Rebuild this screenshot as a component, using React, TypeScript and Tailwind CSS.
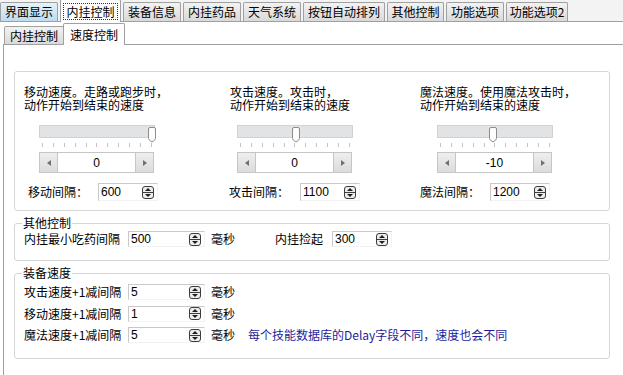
import React from "react";

const CJK = "font-['Noto_Sans_CJK_SC','Noto_Sans',sans-serif]";

function Spinner() {
  return (
    <svg width="12" height="13" viewBox="0 0 12 13" className="shrink-0">
      <rect x="0.5" y="0.5" width="11" height="12" rx="2.5" fill="#ededed" stroke="#3c3c3c" />
      <line x1="1" y1="6.5" x2="11" y2="6.5" stroke="#3c3c3c" />
      <polygon points="3,5 9,5 6,2" fill="#1e1e1e" />
      <polygon points="3,8 9,8 6,11" fill="#1e1e1e" />
    </svg>
  );
}

function NumInput({ value, w, h = 16 }: { value: string; w: number; h?: number }) {
  return (
    <div
      className="flex items-center justify-between bg-white border-t border-l border-[#c9c9c9] border-r border-b border-r-[#f2f2f2] border-b-[#f2f2f2] pl-[2px] pr-[3px] shrink-0"
      style={{ width: w, height: h }}
    >
      <span className="font-['Liberation_Sans',sans-serif] text-[12px] leading-none text-black">{value}</span>
      <Spinner />
    </div>
  );
}

function TopTab({ label, w, ml, selected, hover }: { label: string; w: number; ml: number; selected?: boolean; hover?: boolean }) {
  if (selected) {
    return (
      <div
        className="h-[23px] -mb-px bg-white border-t border-l border-r border-[#a0a0a0] rounded-t-[2px] flex items-center justify-center shrink-0 relative z-10"
        style={{ width: w, marginLeft: ml }}
      >
        <span className="border border-dotted border-[#333] px-[2px] leading-[15px] text-[12px] text-black">{label}</span>
      </div>
    );
  }
  return (
    <div
      className={
        "h-[19px] border-t border-l border-r border-[#a0a0a0] rounded-t-[2px] flex items-center justify-center shrink-0 text-[12px] text-black " +
        (hover ? "bg-gradient-to-b from-[#e4f2fa] to-[#bcdcef]" : "bg-gradient-to-b from-[#f3f3f3] to-[#d9d9d9]")
      }
      style={{ width: w, marginLeft: ml }}
    >
      {label}
    </div>
  );
}

function Ticks() {
  return (
    <div className="flex justify-between px-[3px] h-[4px] mt-[5px]">
      {Array.from({ length: 11 }).map((_, i) => (
        <div key={i} className="w-px h-[4px] bg-[#c4c4c4]" />
      ))}
    </div>
  );
}

function Thumb({ left }: { left: number }) {
  return (
    <svg width="8" height="16" viewBox="0 0 8 16" className="absolute top-[1px]" style={{ left }}>
      <path d="M0.5,2 Q0.5,0.5 2,0.5 H6 Q7.5,0.5 7.5,2 V11.5 Q7.5,13 4,15 Q0.5,13 0.5,11.5 Z" fill="#fdfdfd" stroke="#8c8c8c" />
    </svg>
  );
}

function ScrollBox({ value }: { value: string }) {
  return (
    <div className="flex h-[21px] w-[115px] border border-[#c6c6c6] bg-white mt-[5px]">
      <div className="w-[18px] h-full bg-gradient-to-b from-[#eeeeee] to-[#dcdcdc] border-r border-[#c6c6c6] flex items-center justify-center">
        <svg width="4" height="6" viewBox="0 0 4 6"><polygon points="4,0 4,6 0,3" fill="#707070" /></svg>
      </div>
      <div className="flex-1 flex items-center justify-center font-['Liberation_Sans',sans-serif] text-[12px] text-black">{value}</div>
      <div className="w-[18px] h-full bg-gradient-to-b from-[#eeeeee] to-[#dcdcdc] border-l border-[#c6c6c6] flex items-center justify-center">
        <svg width="4" height="6" viewBox="0 0 4 6"><polygon points="0,0 0,6 4,3" fill="#707070" /></svg>
      </div>
    </div>
  );
}

function SpeedColumn({
  w,
  line1,
  sliderOff,
  thumb,
  value,
  label,
  labelOff,
  labelW,
  input,
}: {
  w?: number;
  line1: string;
  sliderOff: number;
  thumb: number;
  value: string;
  label: string;
  labelOff: number;
  labelW: number;
  input: string;
}) {
  return (
    <div className={"flex flex-col " + (w ? "shrink-0" : "flex-1")} style={w ? { width: w } : undefined}>
      <div className="text-[12px] leading-[13px] text-black">
        <div>{line1}</div>
        <div>动作开始到结束的速度</div>
      </div>
      <div className="mt-[14px]" style={{ marginLeft: sliderOff, width: 116 }}>
        <div className="relative h-[13px] bg-[#e1e3e5] border border-[#d0d3d6]">
          <Thumb left={thumb} />
        </div>
        <Ticks />
        <ScrollBox value={value} />
      </div>
      <div className="flex items-center mt-[10px] h-[18px]">
        <div className="text-[12px] text-black shrink-0" style={{ marginLeft: labelOff, width: labelW }}>
          {label}
        </div>
        <NumInput value={input} w={60} h={18} />
      </div>
    </div>
  );
}

function Group({ title, h, children, className }: { title?: string; h: number; children: React.ReactNode; className?: string }) {
  return (
    <div className={"relative w-[596px] border border-[#d6d6d6] rounded-[3px] " + (className || "")} style={{ height: h }}>
      {title && (
        <div className="absolute -top-[8px] left-[7px] bg-white px-px text-[12px] leading-[13px] text-black">{title}</div>
      )}
      {children}
    </div>
  );
}

function Row({ label, value, children }: { label: string; value: string; children?: React.ReactNode }) {
  return (
    <div className="flex items-center h-[16px] text-[12px] text-black">
      <div className="w-[104px] shrink-0">{label}</div>
      <NumInput value={value} w={77} />
      <div className="ml-[6px]">毫秒</div>
      {children}
    </div>
  );
}

export default function App() {
  return (
    <div className={"w-[623px] h-[375px] overflow-hidden bg-white flex flex-col " + CJK}>
      {/* top tab strip */}
      <div className="h-[22px] flex items-end border-b border-[#a0a0a0] bg-[#f3f3f3] shrink-0">
        <TopTab label="界面显示" w={58} ml={0} hover />
        <TopTab label="内挂控制" w={61} ml={2} selected />
        <TopTab label="装备信息" w={58} ml={2} />
        <TopTab label="内挂药品" w={58} ml={2} />
        <TopTab label="天气系统" w={58} ml={2} />
        <TopTab label="按钮自动排列" w={82} ml={2} />
        <TopTab label="其他控制" w={57} ml={2} />
        <TopTab label="功能选项" w={58} ml={2} />
        <TopTab label="功能选项2" w={62} ml={2} />
      </div>

      {/* inner tab control */}
      <div className="ml-[3px] mt-[2px] flex flex-col flex-1">
        <div className="h-[21px] flex items-end border-b border-[#a0a0a0] pl-px shrink-0">
          <div className="h-[18px] w-[60px] border-t border-l border-r border-[#a0a0a0] rounded-t-[2px] bg-gradient-to-b from-[#f3f3f3] to-[#d9d9d9] flex items-center justify-center text-[12px] text-black">
            内挂控制
          </div>
          <div className="h-[22px] -mb-px -ml-px w-[62px] border-t border-l border-r border-[#a0a0a0] rounded-t-[2px] bg-white flex items-center justify-center text-[12px] text-black relative z-10">
            速度控制
          </div>
        </div>

        <div className="flex-1 border-l border-[#a0a0a0] pl-[10px] pt-[26px]">
          <Group h={140}>
            <div className="flex pl-[9px] pt-[13px]">
              <SpeedColumn
                w={206}
                line1="移动速度。走路或跑步时，"
                sliderOff={15}
                thumb={108}
                value="0"
                label="移动间隔："
                labelOff={4}
                labelW={70}
                input="600"
              />
              <SpeedColumn
                w={190}
                line1="攻击速度。攻击时，"
                sliderOff={7}
                thumb={54}
                value="0"
                label="攻击间隔："
                labelOff={-1}
                labelW={71}
                input="1100"
              />
              <SpeedColumn
                line1="魔法速度。使用魔法攻击时，"
                sliderOff={17}
                thumb={51}
                value="-10"
                label="魔法间隔："
                labelOff={0}
                labelW={70}
                input="1200"
              />
            </div>
          </Group>

          <Group title="其他控制" h={38} className="mt-[12px]">
            <div className="pl-[9px] pt-[7px]">
              <Row label="内挂最小吃药间隔" value="500">
                <div className="ml-[40px] w-[57px] shrink-0">内挂捡起</div>
                <NumInput value="300" w={60} />
              </Row>
            </div>
          </Group>

          <Group title="装备速度" h={86} className="mt-[12px]">
            <div className="pl-[9px] pt-[10px] flex flex-col gap-[5.5px]">
              <Row label="攻击速度+1减间隔" value="5" />
              <Row label="移动速度+1减间隔" value="1" />
              <Row label="魔法速度+1减间隔" value="5">
                <div className="ml-[13px] text-[#1c1c9c]">每个技能数据库的Delay字段不同，速度也会不同</div>
              </Row>
            </div>
          </Group>
        </div>
      </div>
    </div>
  );
}
